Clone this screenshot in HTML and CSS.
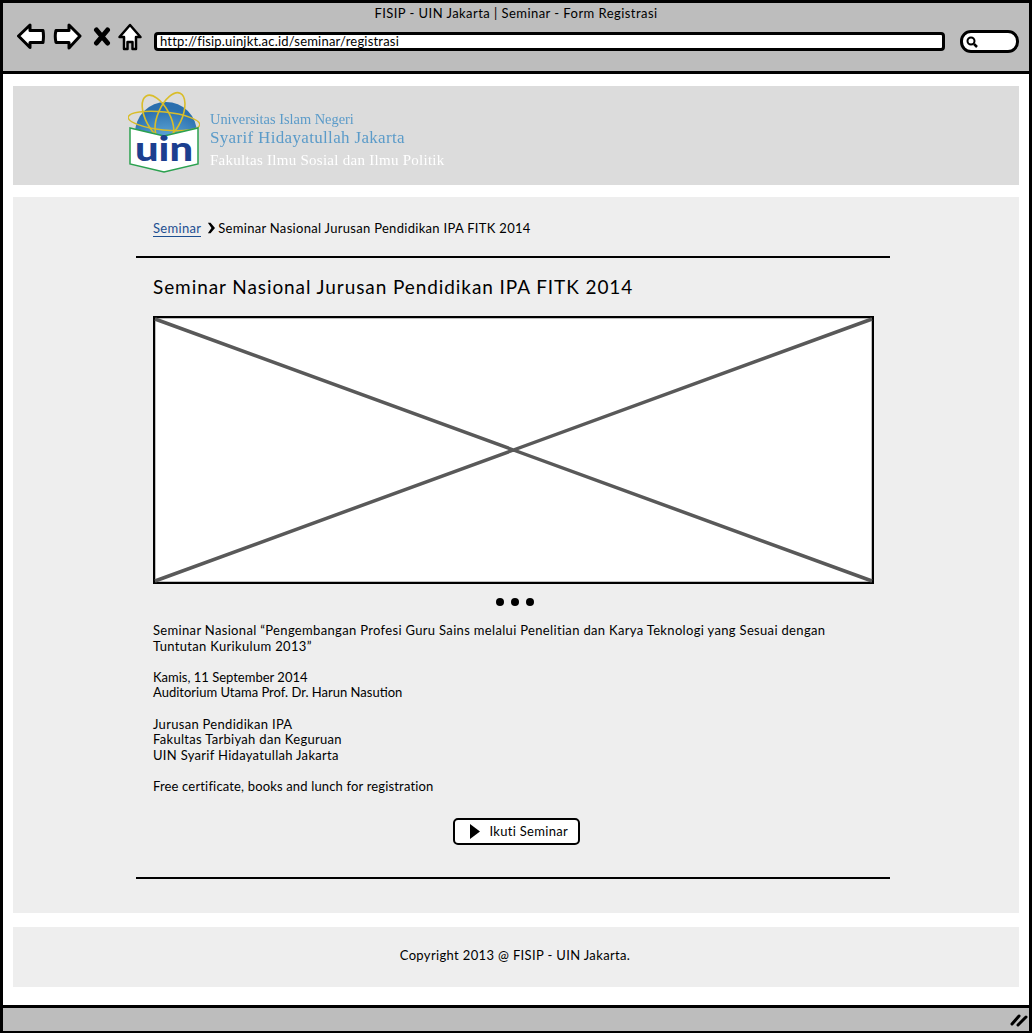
FILE: index.html
```html
<!DOCTYPE html>
<html lang="en">
	<head>
		<meta charset="utf-8">
		<title>FISIP - UIN Jakarta | Seminar - Form Registrasi</title>
		<link rel="stylesheet" href="styles.css">
	</head>
	<body>
		<div class="window">
			<header class="toolbar">
				<div class="window-title">FISIP - UIN Jakarta | Seminar - Form Registrasi</div>
				<div class="nav-row">
					<svg class="nav-icon" width="30" height="28" viewBox="0 0 30 28"><path d="M1.5 13 L13 2 L13 7.5 L26 7.5 Q27 13 26 19.5 L13 19.5 L13 24.5 Z" fill="#fff" stroke="#000" stroke-width="3" stroke-linejoin="round"/></svg>
					<svg class="nav-icon" width="30" height="28" viewBox="0 0 30 28"><path d="M27 13 L16 2 L16 7.5 L3 7.5 Q1.5 13 3 19.5 L16 19.5 L16 25 Z" fill="#fff" stroke="#000" stroke-width="3" stroke-linejoin="round"/></svg>
					<svg class="nav-icon nav-stop" width="18" height="20" viewBox="0 0 18 20"><path d="M3.5 3 L14.5 16 M14.5 3 L3.5 16" fill="none" stroke="#000" stroke-width="5" stroke-linecap="round"/></svg>
					<svg class="nav-icon nav-home" width="26" height="29" viewBox="0 0 26 29"><path d="M12 2 L22.5 14 L18 14 L18 26 L14.5 26 L14.5 19 L9.5 19 L9.5 26 L6 26 L6 14 L1.5 14 Z" fill="#fff" stroke="#000" stroke-width="2.5" stroke-linejoin="round"/></svg>
					<div class="address-bar">http://fisip.uinjkt.ac.id/seminar/registrasi</div>
					<div class="search-box">
						<svg width="14" height="14" viewBox="0 0 14 14"><circle cx="6" cy="6" r="3.5" fill="none" stroke="#000" stroke-width="2"/><path d="M9 9 L12 12" stroke="#000" stroke-width="2.5"/></svg>
					</div>
				</div>
			</header>

			<div class="page">
				<section class="banner">
					<svg class="logo" width="72" height="83" viewBox="0 0 72 83">
						<defs>
							<radialGradient id="globe" cx="50%" cy="85%" r="75%">
								<stop offset="0" stop-color="#7cc6ee"/>
								<stop offset="1" stop-color="#2a6fae"/>
							</radialGradient>
						</defs>
						<circle cx="38" cy="42" r="31" fill="url(#globe)"/>
						<ellipse cx="36" cy="30" rx="36" ry="9" fill="none" stroke="#d9bd2a" stroke-width="1.4" transform="rotate(6 36 30)"/>
						<ellipse cx="30" cy="27" rx="12" ry="25" fill="none" stroke="#d9bd2a" stroke-width="1.6" transform="rotate(-28 30 27)"/>
						<ellipse cx="42" cy="25" rx="12" ry="25" fill="none" stroke="#d9bd2a" stroke-width="1.6" transform="rotate(24 42 25)"/>
						<path d="M2 37 L36 45 L70 37 L70 73 L36 81 L2 73 Z" fill="#fff" stroke="#2ba14f" stroke-width="1.5"/>
						<text class="logo-mark" x="36" y="70" text-anchor="middle" textLength="58" lengthAdjust="spacingAndGlyphs">uin</text>
					</svg>
					<div class="banner-text">
						<div class="banner-line1">Universitas Islam Negeri</div>
						<div class="banner-line2">Syarif Hidayatullah Jakarta</div>
						<div class="banner-line3">Fakultas Ilmu Sosial dan Ilmu Politik</div>
					</div>
				</section>

				<main class="content">
					<div class="column">
						<nav class="crumbs">
							<a href="#">Seminar</a>
							<svg width="8" height="12" viewBox="0 0 9 12"><path d="M1 0 L4 0 L9 6 L4 12 L1 12 L5 6 Z" fill="#000"/></svg>
							<span>Seminar Nasional Jurusan Pendidikan IPA FITK 2014</span>
						</nav>
						<div class="body">
							<h1>Seminar Nasional Jurusan Pendidikan IPA FITK 2014</h1>
							<svg class="placeholder" width="721" height="268" viewBox="0 0 721 268">
								<rect x="1" y="1" width="719" height="266" fill="#fff" stroke="#000" stroke-width="2.5"/>
								<path d="M2 3 L719 265 M719 3 L2 265" stroke="#595959" stroke-width="3.5" fill="none"/>
							</svg>
							<div class="dots"><i></i><i></i><i></i></div>
							<p class="wide">Seminar Nasional “Pengembangan Profesi Guru Sains melalui Penelitian dan Karya Teknologi yang Sesuai dengan<br>Tuntutan Kurikulum 2013”</p>
							<p class="tight">Kamis, 11 September 2014<br>Auditorium Utama Prof. Dr. Harun Nasution</p>
							<p>Jurusan Pendidikan IPA<br>Fakultas Tarbiyah dan Keguruan<br>UIN Syarif Hidayatullah Jakarta</p>
							<p class="snug">Free certificate, books and lunch for registration</p>
							<div class="action">
								<a class="button" href="#">
									<svg width="10" height="15" viewBox="0 0 10 15"><path d="M0 0 L10 7.5 L0 15 Z" fill="#000"/></svg>
									Ikuti Seminar
								</a>
							</div>
						</div>
					</div>
				</main>

				<footer class="page-footer">Copyright 2013 @ FISIP - UIN Jakarta.</footer>
			</div>

			<div class="statusbar">
				<svg width="18" height="14" viewBox="0 0 18 14"><path d="M2 11 L9 3 M8 12 L16 4" stroke="#000" stroke-width="3" stroke-linecap="round"/></svg>
			</div>
		</div>
	</body>
</html>
```

FILE: styles.css
```css
* {
	box-sizing: border-box;
}
body {
	margin: 0;
	background: #fff;
	color: #000;
	font-family: "Lato", "Liberation Sans", sans-serif;
	font-size: 13px;
	letter-spacing: 0.3px;
}
.window {
	height: 1033px;
	display: flex;
	flex-direction: column;
	border: solid #000;
	border-width: 3px 3px 0 3px;
}

/* browser chrome */
.toolbar {
	height: 71px;
	background: #bdbdbd;
	border-bottom: 3px solid #000;
	flex: none;
}
.window-title {
	text-align: center;
	padding-top: 3px;
	height: 20px;
	line-height: 14px;
	letter-spacing: 0.45px;
}
.nav-row {
	display: flex;
	align-items: flex-start;
	padding-left: 14px;
}
.nav-icon {
	margin-right: 6px;
	flex: none;
}
.nav-stop {
	margin-top: 4px;
	margin-left: 4px;
	margin-right: 7px;
}
.nav-home {
	margin-right: 10px;
}
.address-bar {
	width: 791px;
	height: 19px;
	margin-top: 9px;
	background: #fff;
	border: 3px solid #000;
	border-radius: 4px;
	line-height: 13px;
	padding-left: 3px;
	letter-spacing: 0.2px;
}
.search-box {
	width: 59px;
	height: 23px;
	margin-left: 15px;
	margin-top: 7px;
	background: #fff;
	border: 3px solid #000;
	border-radius: 11px;
	display: flex;
	align-items: center;
	padding-left: 2px;
}

/* page area */
.page {
	flex: 1;
	padding: 12px 10px 0 10px;
}
.banner {
	height: 99px;
	background: #dcdcdc;
	display: flex;
	padding: 5px 0 0 115px;
}
.logo {
	flex: none;
}
.logo-mark {
	font-family: "Lato", sans-serif;
	font-weight: 900;
	font-size: 34px;
	letter-spacing: 0;
	fill: #1c3f8f;
}
.banner-text {
	font-family: "Liberation Serif", serif;
	letter-spacing: 0;
	padding: 19px 0 0 10px;
	color: #5b9bc9;
	filter: blur(0.3px);
}
.banner-line1 {
	font-size: 14.4px;
	line-height: 18px;
}
.banner-line2 {
	font-size: 17px;
	line-height: 20px;
	letter-spacing: 0.33px;
}
.banner-line3 {
	font-size: 15px;
	line-height: 24px;
	height: 20px;
	overflow: hidden;
	color: #fff;
	letter-spacing: 0.27px;
}
.content {
	height: 716px;
	margin-top: 12px;
	background: #eee;
	padding-left: 123px;
}
.column {
	width: 754px;
}
.crumbs {
	height: 61px;
	padding: 23px 0 0 17px;
	display: flex;
	align-items: flex-start;
	line-height: 16px;
	border-bottom: 2px solid #000;
}
.crumbs a {
	color: #1d4f91;
	text-decoration: none;
	border-bottom: 1px solid #1d4f91;
	margin-right: 6px;
}
.crumbs svg {
	margin-top: 2px;
	margin-right: 3px;
}
.body {
	padding: 0 0 32px 17px;
	border-bottom: 2px solid #000;
}
h1 {
	font-size: 19px;
	font-weight: 400;
	letter-spacing: 0.92px;
	line-height: 24px;
	margin: 0;
	padding: 17px 0 17px;
}
.placeholder {
	display: block;
}
.dots {
	display: flex;
	justify-content: center;
	gap: 7px;
	padding: 14px 0 17px;
	width: 723px;
}
.dots i {
	width: 8px;
	height: 8px;
	border-radius: 50%;
	background: #000;
}
.body p {
	margin: 0 0 15.6px;
	line-height: 15.6px;
	max-width: 721px;
}
.body p.wide {
	letter-spacing: 0.33px;
}
.body p.tight {
	letter-spacing: 0px;
}
.body p.snug {
	letter-spacing: 0.16px;
}
.action {
	display: flex;
	justify-content: center;
	width: 726px;
	margin-top: 23px;
}
.button {
	width: 127px;
	height: 27px;
	background: #fff;
	border: 2px solid #000;
	border-radius: 5px;
	color: #000;
	text-decoration: none;
	display: flex;
	align-items: center;
	gap: 10px;
	padding-left: 15px;
}
.page-footer {
	height: 60px;
	margin-top: 14px;
	padding: 0 2px 4px 0;
	background: #eee;
	display: flex;
	align-items: center;
	justify-content: center;
	letter-spacing: 0.35px;
}
.statusbar {
	height: 28px;
	flex: none;
	background: #bdbdbd;
	border-top: 3px solid #000;
	border-bottom: 2px solid #000;
	display: flex;
	align-items: center;
	justify-content: flex-end;
	padding-right: 1px;
}
```
